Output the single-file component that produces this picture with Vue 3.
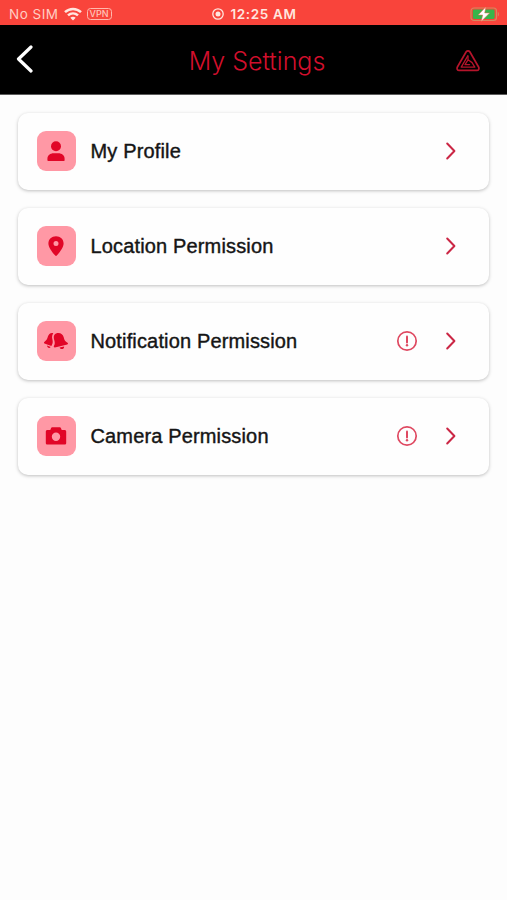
<template>
  <div class="screen">
    <div class="status-bar">
      <div class="status-left">
        <span class="carrier">No SIM</span>
        <svg class="wifi" viewBox="0 0 18 14" width="18" height="14" fill="none" stroke="currentColor" stroke-width="2.5">
          <path d="M1 5.2C5.6.8 12.4.8 17 5.2" />
          <path d="M4 8.4c2.9-2.7 7.1-2.7 10 0" />
          <path d="M9 13.4 6.3 10.8c1.5-1.5 3.9-1.5 5.4 0z" fill="currentColor" stroke="none" />
        </svg>
        <span class="vpn">VPN</span>
      </div>
      <div class="status-time">
        <svg viewBox="0 0 12 12" width="12" height="12">
          <circle cx="6" cy="6" r="5.2" fill="none" stroke="currentColor" stroke-width="1.3" />
          <circle cx="6" cy="6" r="2.5" fill="currentColor" />
        </svg>
        <span>12:25 AM</span>
      </div>
      <svg class="battery" viewBox="0 0 30 16" width="30" height="16">
        <rect x="1" y="2" width="25.5" height="12.5" rx="3" fill="none" stroke="#d58a61" stroke-width="1.2" />
        <rect x="2.8" y="3.6" width="21.8" height="9.4" rx="1.4" fill="#38b54a" />
        <path d="M27.8 6v4.6c1.5-.5 1.5-4.1 0-4.6z" fill="#d98868" />
        <path d="M15.8 1 8.2 9h4.5l-1.5 6.4L19.6 7h-4.9z" fill="#fff" stroke="#f2664d" stroke-width=".5" />
      </svg>
    </div>

    <header class="navbar">
      <button class="back" aria-label="Back">
        <svg viewBox="0 0 18 28" width="18" height="28">
          <path d="M15 2 2.5 14 15 26" fill="none" stroke="#fff" stroke-width="3.2" stroke-linecap="round" stroke-linejoin="round" />
        </svg>
      </button>
      <h1>My Settings</h1>
      <svg class="brand" viewBox="0 0 26 24" width="26" height="24" fill="none" stroke="#b5142b" stroke-linejoin="round" stroke-linecap="round">
        <path d="M11.2 2.8a2.2 2.2 0 0 1 3.6 0L23.6 18c.9 1.7.1 3.4-1.7 3.4H4.1c-1.8 0-2.6-1.7-1.7-3.4z" stroke-width="1.7" />
        <path d="M12.8 6.8 6.2 18.2h13.6l-2.6-4.4" stroke-width="1.3" />
        <path d="M13 7.2v3.6l-3 4.8h4.6M13 10.8l3.8 2.6" stroke-width="1.3" />
      </svg>
    </header>

    <main class="list">
      <div v-for="item in items" :key="item.label" class="card">
        <span class="tile">
          <svg viewBox="0 0 24 24" width="24" height="24">
            <template v-if="item.icon === 'user'">
              <circle cx="12" cy="7.2" r="5" />
              <path d="M3.4 21.2v-1.4c0-3.5 2.8-5.6 6.2-5.6h4.8c3.4 0 6.2 2.1 6.2 5.6v1.4c0 .6-.4.8-.9.8H4.3c-.5 0-.9-.2-.9-.8z" />
            </template>
            <path
              v-else-if="item.icon === 'pin'"
              fill-rule="evenodd"
              d="M12 2.2c-4.3 0-7.6 3.1-7.6 7.2 0 3.4 3.1 7.9 6.8 12.1.5.6 1.1.6 1.6 0 3.7-4.2 6.8-8.7 6.8-12.1 0-4.1-3.3-7.2-7.6-7.2zm0 4.7a2.5 2.5 0 1 1 0 5 2.5 2.5 0 0 1 0-5z"
            />
            <template v-else-if="item.icon === 'bells'">
              <path d="M9.3 4.2C6.9 3.2 4.6 4.9 3.9 7.6 3.2 10.4 2.3 11.5.3 12.9c-.7.5-.5 1.3.2 1.6l6.9 2.6c.2-1.2.9-1.9 1.2-3.2.4-2-.3-3.1-.5-5.1-.2-1.9.2-3.3 1.2-4.6z" />
              <path d="M3.1 16.6 6.6 18c-.9 1.7-3.6.9-3.5-1.4z" />
              <path d="M12.1 4.4c3.7-1.3 6.8.6 7.6 3.8.7 2.8 1.5 4.4 3.8 5.6.7.4.6 1.4-.2 1.6l-12.4 3c-.9.2-1.5-.6-1-1.4 1.4-2.3.8-4.2.2-6.5-.8-2.9-.2-5.2 2-6.1z" />
              <path d="m15.6 18.5 4.5-1.1c.3 2.9-3.5 3.7-4.5 1.1z" />
            </template>
            <path
              v-else
              fill-rule="evenodd"
              d="M8.2 3.3h7.6c.6 0 .9.3 1.1.8l.8 1.8h2.8c1 0 1.7.7 1.7 1.7v11.3c0 1-.7 1.7-1.7 1.7h-17c-1 0-1.7-.7-1.7-1.7V7.6c0-1 .7-1.7 1.7-1.7h2.8l.8-1.8c.2-.5.5-.8 1.1-.8zM12 8.6a4.2 4.2 0 1 0 0 8.4 4.2 4.2 0 0 0 0-8.4z"
            />
          </svg>
        </span>
        <span class="label">{{ item.label }}</span>
        <svg v-if="item.alert" class="alert" viewBox="0 0 22 22" width="22" height="22">
          <circle cx="11" cy="11" r="9.2" fill="none" stroke="#df4961" stroke-width="1.7" />
          <path d="M11 6.6v5.8" stroke="#df4961" stroke-width="2" stroke-linecap="round" />
          <circle cx="11" cy="15.3" r="1.2" fill="#df4961" />
        </svg>
        <svg class="chevron" viewBox="0 0 12 20" width="12" height="20">
          <path d="M2.2 2.5 9.4 10l-7.2 7.5" fill="none" stroke="#cb2745" stroke-width="2" stroke-linecap="round" stroke-linejoin="round" />
        </svg>
      </div>
    </main>
  </div>
</template>

<script setup>
const items = [
  { label: 'My Profile', icon: 'user', alert: false },
  { label: 'Location Permission', icon: 'pin', alert: false },
  { label: 'Notification Permission', icon: 'bells', alert: true },
  { label: 'Camera Permission', icon: 'camera', alert: true }
]
</script>

<style>
body {
  margin: 0;
  background: #fdfdfd;
}
</style>

<style scoped>
.screen {
  width: 100%;
  height: 100vh;
  overflow: hidden;
  background: #fdfdfd;
  font-family: 'Liberation Sans', Arial, sans-serif;
}

.status-bar {
  display: grid;
  grid-template-columns: 1fr auto 1fr;
  align-items: center;
  box-sizing: border-box;
  height: 25px;
  padding: 2px 7px 0 9px;
  background: #f9443b;
  color: #ffe6df;
  font-family: Inter, sans-serif;
}

.status-left {
  display: flex;
  align-items: center;
}

.carrier {
  font-size: 13.5px;
  letter-spacing: 0.5px;
  color: #ffcdc3;
}

.wifi {
  margin-left: 5px;
}

.vpn {
  box-sizing: border-box;
  width: 25px;
  height: 12px;
  margin-left: 5px;
  border: 1px solid #ffb9ad;
  border-radius: 3.5px;
  color: #ffc5ba;
  font-size: 9px;
  font-weight: 500;
  line-height: 10px;
  text-align: center;
}

.status-time {
  display: flex;
  align-items: center;
  gap: 6px;
  font-size: 13.5px;
  font-weight: 600;
  letter-spacing: 0.65px;
}

.battery {
  justify-self: end;
}

.navbar {
  display: grid;
  grid-template-columns: 60px 1fr 60px;
  align-items: center;
  height: 69px;
  border-bottom: 1px solid #5c5c5c;
  background: #000;
}

.back {
  display: flex;
  margin: -2px 0 0 16px;
  padding: 0;
  border: 0;
  background: none;
}

h1 {
  margin: 3px 0 0 7px;
  color: #d20f2c;
  font-family: Inter, sans-serif;
  font-size: 25px;
  font-weight: 300;
  line-height: 32px;
  text-align: center;
}

.brand {
  margin: 2px 0 0 8px;
}

.list {
  display: flex;
  flex-direction: column;
  gap: 18px;
  padding: 17.5px 18px 0;
}

.card {
  display: flex;
  align-items: center;
  box-sizing: border-box;
  height: 77px;
  padding: 0 32px 0 18.5px;
  border-radius: 10px;
  background: #fefefe;
  box-shadow: 0 1px 3.5px rgba(0, 0, 0, 0.25);
}

.tile {
  display: flex;
  align-items: center;
  justify-content: center;
  width: 39.5px;
  height: 39.5px;
  border-radius: 9px;
  background: #ff98a5;
}

.tile svg {
  fill: #e10627;
}

.label {
  flex: 1;
  margin-left: 14.5px;
  color: #151515;
  font-size: 20px;
  letter-spacing: 0.15px;
  -webkit-text-stroke: 0.4px #151515;
  white-space: nowrap;
}

.alert {
  margin-right: 27px;
}
</style>
